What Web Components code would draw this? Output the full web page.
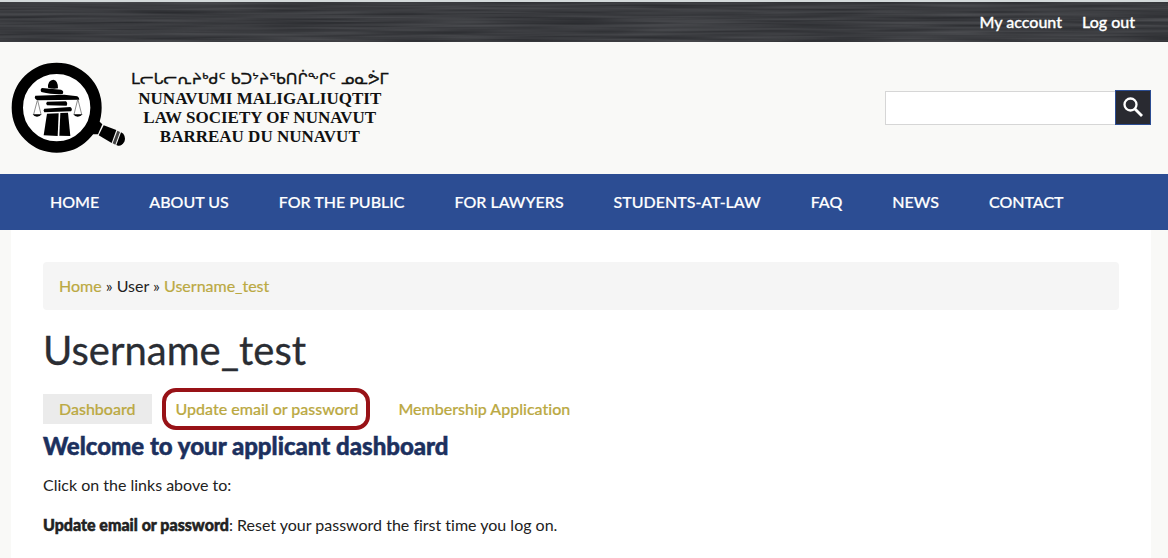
<!DOCTYPE html>
<html lang="en">
<head>
<meta charset="utf-8">
<title>Username_test | Law Society of Nunavut</title>
<style>
    body {
        display: flex;
        flex-direction: column;
        min-height: 100vh;
        margin: 0;
        background: #f9f9f7;
        color: #222;
        font: 16px/24px Lato, "Liberation Sans", sans-serif;
        font-variant-ligatures: none;
    }
    law-page {
        flex: 1;
    }
</style>
</head>
<body>

<law-topbar>
    <a href="#account">My account</a>
    <a href="#logout">Log out</a>
</law-topbar>

<law-header></law-header>

<law-menu>
    <a href="#home">HOME</a>
    <a href="#about">ABOUT US</a>
    <a href="#public">FOR THE PUBLIC</a>
    <a href="#lawyers">FOR LAWYERS</a>
    <a href="#students">STUDENTS-AT-LAW</a>
    <a href="#faq">FAQ</a>
    <a href="#news">NEWS</a>
    <a href="#contact">CONTACT</a>
</law-menu>

<law-page>
    <law-breadcrumb slot="breadcrumb"><a href="#home">Home</a> » User » <a href="#user">Username_test</a></law-breadcrumb>
    <span slot="title">Username_test</span>
    <law-tab slot="tabs" label="Dashboard" active></law-tab>
    <law-tab slot="tabs" label="Update email or password" marked></law-tab>
    <law-tab slot="tabs" label="Membership Application"></law-tab>
    <law-dashboard></law-dashboard>
</law-page>

<script>
class LawElement extends HTMLElement {
    constructor() {
        super();
        const template = document.createElement('template');
        template.innerHTML = this.constructor.html;
        this.attachShadow({ mode: 'open' });
        this.shadowRoot.appendChild(template.content.cloneNode(true));
    }
}

class LawTopbar extends LawElement {
    static html = /*html*/`
<style>
    :host {
        display: block;
        position: relative;
        border-top: 2px solid #d3d9da;
        background: #3a3b40;
    }
    svg {
        position: absolute;
        inset: 0;
        width: 100%;
        height: 100%;
    }
    nav {
        position: relative;
        display: flex;
        justify-content: flex-end;
        gap: 20px;
        padding: 8px 33px;
    }
    ::slotted(a) {
        color: #fff;
        font-weight: 500;
        text-decoration: none;
        -webkit-text-stroke: 0.3px;
    }
</style>
<svg aria-hidden="true">
    <filter id="grain" x="0" y="0" width="100%" height="100%" color-interpolation-filters="sRGB">
        <feTurbulence type="fractalNoise" baseFrequency="0.008 0.35" numOctaves="2" seed="8"/>
        <feColorMatrix values="0.18 0 0 0 0.14  0.18 0 0 0 0.145  0.18 0 0 0 0.16  0 0 0 0 1"/>
    </filter>
    <rect width="100%" height="100%" filter="url(#grain)"/>
</svg>
<nav><slot></slot></nav>
`;
}
customElements.define('law-topbar', LawTopbar);

class LawLogo extends LawElement {
    // magnifying glass over an inuksuk that carries scales
    static html = /*html*/`
<style>
    :host {
        display: block;
    }
    a {
        display: flex;
        gap: 6px;
        color: #111;
        text-decoration: none;
    }
    .name {
        display: flex;
        flex-direction: column;
        align-items: center;
        padding-top: 6px;
        font: bold 17px/19px "Liberation Serif", serif;
        white-space: nowrap;
    }
    .syllabics {
        font: 16px/21px "DejaVu Sans", sans-serif;
        -webkit-text-stroke: 0.3px #111;
    }
</style>
<a href="#home">
    <svg width="114" height="92" viewBox="1 -3 342 276" aria-hidden="true">
        <circle cx="138" cy="134" r="118" fill="#fff" stroke="#000" stroke-width="34"/>
        <path d="M256 166 275 184 262 214 236 214Z"/>
        <path d="M279 187 317 201 303 240 264 217Z"/>
        <path d="M320 203 328 207 314 245 306 241Z" fill="#444"/>
        <path d="M331 208 338 212Q346 223 341 236Q333 250 322 248L317 246Z"/>
        <path d="M112 74Q111 52 128 50Q142 52 142 76Q127 79 112 74Z"/>
        <path d="M94 75 151 80Q161 83 156 93Q131 96 92 87Q87 80 94 75Z"/>
        <path d="M74 98 161 95 200 100Q206 104 206 110L83 112Q68 108 74 98Z"/>
        <path d="M109 116 166 115Q172 120 168 128L109 127Q104 121 109 116Z"/>
        <path d="M101 137 179 132Q187 138 181 145L101 148Q96 142 101 137Z"/>
        <path d="M109 152 144 151 141 219 99 217Z"/>
        <path d="M149 150 172 149 179 219 146 218Z"/>
        <path d="M80 112 69 154M81 112 91 154M201 110 190 154M202 110 213 154" fill="none" stroke="#555" stroke-width="2"/>
        <path d="M66 154H93Q88 161 79 161Q70 161 66 154ZM188 154H216Q210 161 201 161Q192 161 188 154Z"/>
    </svg>
    <span class="name">
        <span class="syllabics">ᒪᓕᒐᓕᕆᔨᒃᑯᑦ ᑲᑐᔾᔨᖃᑎᒌᖕᒋᑦ ᓄᓇᕘᒥ</span>
        <span>NUNAVUMI MALIGALIUQTIT</span>
        <span>LAW SOCIETY OF NUNAVUT</span>
        <span>BARREAU DU NUNAVUT</span>
    </span>
</a>
`;
}
customElements.define('law-logo', LawLogo);

class LawSearch extends LawElement {
    static html = /*html*/`
<style>
    :host {
        display: block;
    }
    form {
        display: flex;
        align-items: flex-end;
    }
    input {
        box-sizing: border-box;
        width: 230px;
        height: 34px;
        padding: 4px 8px;
        border: 1px solid #d6d6d6;
        border-right: 0;
        border-radius: 0;
        background: #fff;
        font: inherit;
    }
    button {
        display: grid;
        place-items: center;
        width: 36px;
        height: 35px;
        padding: 0;
        border: 1px solid #2c4d93;
        background: #292a31;
    }
</style>
<form role="search">
    <input type="text" aria-label="Search">
    <button type="button" aria-label="Search">
        <svg width="20" height="20" viewBox="0 0 20 20" fill="none" stroke="#fff" aria-hidden="true">
            <circle cx="7.500" cy="7.500" r="6" stroke-width="2.300"/>
            <path d="M12 12 19 19" stroke-width="2.800"/>
        </svg>
    </button>
</form>
`;
}
customElements.define('law-search', LawSearch);

class LawHeader extends LawElement {
    static html = /*html*/`
<style>
    :host {
        display: block;
    }
    header {
        display: flex;
        justify-content: space-between;
        align-items: center;
        padding: 20px 17px 20px 11px;
    }
    law-search {
        margin-bottom: 2px;
    }
</style>
<header>
    <law-logo></law-logo>
    <law-search></law-search>
</header>
`;
}
customElements.define('law-header', LawHeader);

class LawMenu extends LawElement {
    static html = /*html*/`
<style>
    :host {
        display: block;
        background: #2c4d93;
    }
    nav {
        display: flex;
        gap: 50px;
        padding: 16px 50px;
    }
    ::slotted(a) {
        color: #fff;
        font-weight: 500;
        text-decoration: none;
        white-space: nowrap;
        -webkit-text-stroke: 0.2px;
    }
</style>
<nav><slot></slot></nav>
`;
}
customElements.define('law-menu', LawMenu);

class LawBreadcrumb extends LawElement {
    static html = /*html*/`
<style>
    :host {
        display: block;
        padding: 12px 16px;
        border-radius: 4px;
        background: #f5f5f5;
        color: #222;
    }
    ::slotted(a) {
        color: #bba943;
        text-decoration: none;
        -webkit-text-stroke: 0.2px;
    }
</style>
<nav aria-label="Breadcrumb"><slot></slot></nav>
`;
}
customElements.define('law-breadcrumb', LawBreadcrumb);

class LawTab extends LawElement {
    static html = /*html*/`
<style>
    :host {
        display: block;
        position: relative;
    }
    a {
        display: block;
        padding: 3px 16px;
        color: #bba943;
        font-weight: 500;
        text-decoration: none;
        white-space: nowrap;
        -webkit-text-stroke: 0.2px;
    }
    :host([active]) a {
        background: #ebebeb;
    }
    /* ring round the tab to look at */
    :host([marked])::after {
        content: "";
        position: absolute;
        inset: -6px 4px -6px 2px;
        border: 4px solid #981217;
        border-radius: 14px;
        pointer-events: none;
    }
</style>
<a href="#tab"></a>
`;

    connectedCallback() {
        this.shadowRoot.querySelector('a').textContent = this.getAttribute('label');
    }
}
customElements.define('law-tab', LawTab);

class LawDashboard extends LawElement {
    static html = /*html*/`
<style>
    :host {
        display: block;
        color: #222;
    }
    h2, strong {
        font-weight: 900;
        -webkit-text-stroke: 0.5px;
    }
    h2 {
        margin: 7px 0 13px;
        color: #1c305e;
        font-size: 24px;
        line-height: 29px;
    }
    p {
        margin: 0 0 16px;
    }
</style>
<h2>Welcome to your applicant dashboard</h2>
<p>Click on the links above to:</p>
<p><strong>Update email or password</strong>: Reset your password the first time you log on.</p>
`;
}
customElements.define('law-dashboard', LawDashboard);

class LawPage extends LawElement {
    static html = /*html*/`
<style>
    :host {
        display: block;
        margin: 0 17px 0 11px;
        padding: 32px 32px 0;
        background: #fff;
    }
    h1 {
        margin: 16px 0 20px;
        color: #2a2d33;
        font-size: 40px;
        font-weight: 400;
        line-height: 48px;
        -webkit-text-stroke: 0.3px;
    }
    .tabs {
        display: flex;
        gap: 8px;
    }
</style>
<main>
    <slot name="breadcrumb"></slot>
    <h1><slot name="title"></slot></h1>
    <nav class="tabs"><slot name="tabs"></slot></nav>
    <slot></slot>
</main>
`;
}
customElements.define('law-page', LawPage);
</script>
</body>
</html>
